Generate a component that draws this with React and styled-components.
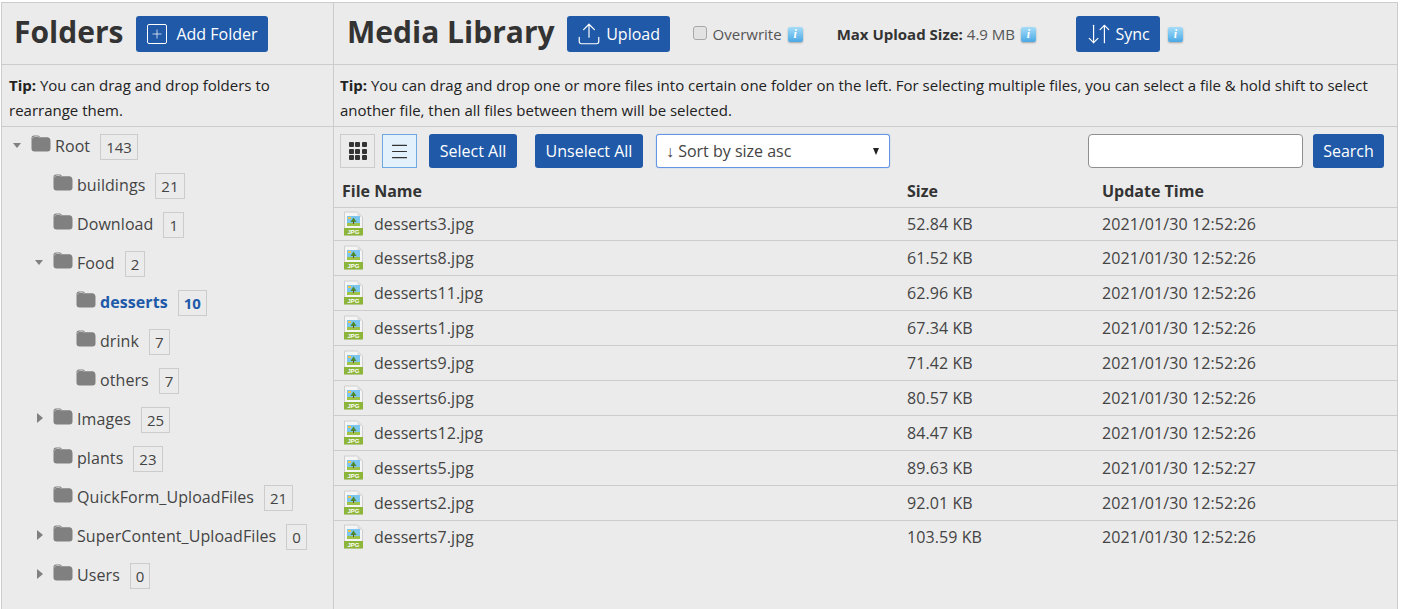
import React from 'react';
import styled, { createGlobalStyle } from 'styled-components';
import { Plus, Upload, ArrowDownUp, Menu } from 'lucide-react';

const GlobalStyle = createGlobalStyle`
  html, body {
    margin: 0;
    padding: 0;
    background: #fff;
    font-family: "Open Sans", "Liberation Sans", sans-serif;
    color: #333;
  }
  * { box-sizing: border-box; }
`;

const Layout = styled.div`
  display: grid;
  grid-template-columns: 332px 1fr;
  width: 1397px;
  height: 607px;
  margin: 2px 0 0 1px;
  background: #ebebeb;
  border: 1px solid #ccc;
  border-bottom: 0;
`;

const Sidebar = styled.aside`
  display: flex;
  flex-direction: column;
  border-right: 1px solid #ccc;
  min-width: 0;
`;

const Main = styled.main`
  display: flex;
  flex-direction: column;
  min-width: 0;
`;

const Header = styled.header`
  display: flex;
  align-items: center;
  height: 62px;
  padding-left: ${p => p.$left}px;
  border-bottom: 1px solid #ccc;
  flex: none;
`;

const Title = styled.h1`
  margin: -3px ${p => p.$gap || 12}px 0 0;
  font-size: 30px;
  font-weight: 700;
  line-height: 40px;
  color: #333;
  white-space: nowrap;
`;

const Button = styled.button`
  display: inline-flex;
  align-items: center;
  justify-content: center;
  gap: ${p => p.$gap || 0}px;
  height: ${p => p.$height || 34}px;
  width: ${p => p.$width}px;
  margin-left: ${p => p.$left || 0}px;
  padding: 0;
  border: 0;
  border-radius: 3px;
  background: #2059a8;
  color: #fff;
  font: 400 16px "Open Sans", sans-serif;
  white-space: nowrap;
  flex: none;
`;

const PlusBox = styled.span`
  display: inline-flex;
  align-items: center;
  justify-content: center;
  width: 20px;
  height: 20px;
  border: 1px solid #fff;
  border-radius: 2px;
`;

const Overwrite = styled.label`
  display: inline-flex;
  align-items: center;
  margin-left: 23px;
  font-size: 15px;
  color: #555;
`;

const Check = styled.span`
  display: inline-block;
  width: 14px;
  height: 14px;
  margin: -1px 6px 0 0;
  border: 1px solid #a8a8a8;
  border-radius: 3px;
  background: #e2e2e2;
`;

const InfoIcon = styled.span`
  display: inline-flex;
  align-items: center;
  justify-content: center;
  width: 15px;
  height: 15px;
  margin-left: ${p => p.$left || 6}px;
  margin-top: 1px;
  border-radius: 2px;
  background: linear-gradient(#a6dcf8 0%, #7cc6f0 45%, #4aa8e4 100%);
  box-shadow: 0 1px 2px rgba(0, 0, 0, 0.3);
  color: #fff;
  font: italic 700 12px "Liberation Serif", serif;
`;

const MaxSize = styled.span`
  display: inline-flex;
  align-items: center;
  margin-left: 34px;
  font-size: 15px;
  color: #555;
  b { font-weight: 700; color: #333; margin-right: 4px; }
`;

const Tip = styled.p`
  height: 62px;
  margin: 0;
  padding: 8px 6px 0 ${p => p.$left}px;
  border-bottom: 1px solid #ccc;
  font-size: 15px;
  line-height: 24.5px;
  color: #222;
  flex: none;
  b { font-weight: 700; }
`;

const Tree = styled.ul`
  list-style: none;
  margin: ${p => (p.$root ? '-1px' : '0')} 0 0;
  padding: 0 0 0 ${p => p.$indent || 0}px;
`;

const Node = styled.div`
  position: relative;
  display: flex;
  align-items: center;
  height: 39px;
  padding-left: 29px;
`;

const Caret = styled.span`
  position: absolute;
  left: ${p => (p.$open ? 10.5 : 13)}px;
  top: ${p => (p.$open ? 16.5 : 14)}px;
  width: 0;
  height: 0;
  border-style: solid;
  border-color: transparent;
  ${p => p.$open
    ? 'border-width: 5px 4.5px 0 4.5px; border-top-color: #808080;'
    : 'border-width: 5px 0 5px 6px; border-left-color: #808080;'}
`;

const FolderSvg = styled.svg`
  width: 20px;
  height: 17px;
  margin: -4px 4px 0 0;
  flex: none;
`;

const Label = styled.span`
  font-size: 16px;
  letter-spacing: 0.08px;
  font-weight: ${p => (p.$active ? 700 : 400)};
  color: ${p => (p.$active ? '#2059a8' : '#444')};
  white-space: nowrap;
`;

const Badge = styled.span`
  display: inline-flex;
  align-items: center;
  justify-content: center;
  height: 26px;
  padding: 1px 5px 0;
  margin: 2px 0 0 10px;
  border: 1px solid #ccc;
  font-size: 15px;
  font-weight: ${p => (p.$active ? 700 : 400)};
  color: ${p => (p.$active ? '#2059a8' : '#444')};
`;

const Toolbar = styled.div`
  display: flex;
  align-items: center;
  height: 48px;
  padding: 0 13px 0 6px;
  flex: none;
`;

const ViewButton = styled.button`
  display: inline-flex;
  align-items: center;
  justify-content: center;
  width: 35px;
  height: 34px;
  margin-right: 7px;
  padding: 0;
  border: 1px solid ${p => (p.$active ? '#6fa8e0' : '#ccc')};
  background: ${p => (p.$active ? '#e3f1fd' : 'transparent')};
  color: #333;
`;

const GridIcon = styled.span`
  display: grid;
  grid-template-columns: repeat(3, 5px);
  gap: 1.5px;
  i {
    height: 5px;
    background: #333;
    border-radius: 1px;
  }
`;

const SortSelect = styled.div`
  display: flex;
  align-items: center;
  justify-content: space-between;
  width: 234px;
  height: 34px;
  margin-left: 13px;
  padding: 0 10px 0 9px;
  border: 1px solid #6596e3;
  border-radius: 3px;
  background: #fff;
  font-size: 16px;
  color: #444;
  box-shadow: 0 0 1px #6596e3;
`;

const SortCaret = styled.span`
  width: 0;
  height: 0;
  border-style: solid;
  border-width: 7px 3.5px 0 3.5px;
  border-color: #222 transparent transparent transparent;
`;

const SearchBox = styled.input`
  width: 215px;
  height: 34px;
  margin-left: auto;
  margin-right: 10px;
  border: 1px solid #8f8f8f;
  border-radius: 4px;
  background: #fff;
`;

const FileTable = styled.table`
  width: 100%;
  border-collapse: collapse;
  table-layout: fixed;
  font-size: 16px;
  letter-spacing: 0.08px;
  color: #444;
`;

const Th = styled.th`
  width: ${p => p.$width}px;
  height: 32px;
  padding: 0 0 0 ${p => p.$pad || 0}px;
  text-align: left;
  font-weight: 700;
  font-size: 16px;
  letter-spacing: 0;
  color: #333;
  border-bottom: 1px solid #ccc;
`;

const Tr = styled.tr`
  height: 35px;
  &:first-child { height: 33px; }
  &:last-child { height: 33px; }
  & + & td { border-top: 1px solid #ccc; }
`;

const Td = styled.td`
  padding: 0;
  white-space: nowrap;
`;

const NameCell = styled.div`
  display: flex;
  align-items: center;
  gap: 10px;
  padding-left: 9px;
`;

const FileSvg = styled.svg`
  width: 21px;
  height: 25px;
  flex: none;
`;

const IconLabel = styled.text`
  font-family: "Liberation Sans", sans-serif;
  font-size: 6px;
  font-weight: 700;
  fill: #fff;
  text-anchor: middle;
`;

const FolderIcon = () => (
  <FolderSvg viewBox="0 0 20 17">
    <path d="M0.5 4V3A2.5 2.5 0 0 1 3 0.5h3.5c1 0 1.5 .5 2 1l.8 .8h7.7A3.5 3.5 0 0 1 19.5 5.8v7.7A3 3 0 0 1 16.5 16.5h-13A3 3 0 0 1 .5 13.5z" fill="#808080" />
    <path d="M1.5 3.5c.5-1.5 1.5-2 2.5-2h3l1.5 1.5" stroke="#bdbdbd" strokeWidth="1" fill="none" />
  </FolderSvg>
);

const JpgIcon = () => (
  <FileSvg viewBox="0 0 21 25">
    <path d="M1.5 1h13l5 5v18h-18z" fill="#f5f5f5" stroke="#cfcfcf" />
    <path d="M14.5 1v5h5z" fill="#dedede" />
    <rect x="4" y="5" width="13" height="10" fill="#7cc5ee" />
    <rect x="4" y="12" width="13" height="3" fill="#9cc24a" />
    <rect x="5" y="6" width="3" height="2" fill="#f5c242" />
    <path d="M10.5 6.5l3 4.5h-6z" fill="#4d8b2a" />
    <rect x="10" y="10.5" width="1" height="2.5" fill="#6b4a22" />
    <rect x="1" y="17" width="19" height="7.5" fill="#8db53a" />
    <IconLabel x="10.5" y="23">JPG</IconLabel>
  </FileSvg>
);

const folders = [
  { name: 'Root', count: 143, open: true, indent: 22, children: [
    { name: 'buildings', count: 21 },
    { name: 'Download', count: 1 },
    { name: 'Food', count: 2, open: true, indent: 23, children: [
      { name: 'desserts', count: 10, active: true },
      { name: 'drink', count: 7 },
      { name: 'others', count: 7 },
    ] },
    { name: 'Images', count: 25, closed: true },
    { name: 'plants', count: 23 },
    { name: 'QuickForm_UploadFiles', count: 21 },
    { name: 'SuperContent_UploadFiles', count: 0, closed: true },
    { name: 'Users', count: 0, closed: true },
  ] },
];

const files = [
  ['desserts3.jpg', '52.84 KB', '2021/01/30 12:52:26'],
  ['desserts8.jpg', '61.52 KB', '2021/01/30 12:52:26'],
  ['desserts11.jpg', '62.96 KB', '2021/01/30 12:52:26'],
  ['desserts1.jpg', '67.34 KB', '2021/01/30 12:52:26'],
  ['desserts9.jpg', '71.42 KB', '2021/01/30 12:52:26'],
  ['desserts6.jpg', '80.57 KB', '2021/01/30 12:52:26'],
  ['desserts12.jpg', '84.47 KB', '2021/01/30 12:52:26'],
  ['desserts5.jpg', '89.63 KB', '2021/01/30 12:52:27'],
  ['desserts2.jpg', '92.01 KB', '2021/01/30 12:52:26'],
  ['desserts7.jpg', '103.59 KB', '2021/01/30 12:52:26'],
];

function FolderTree({ items, indent, root }) {
  return (
    <Tree $indent={indent} $root={root}>
      {items.map(item => (
        <li key={item.name}>
          <Node>
            {item.open && <Caret $open />}
            {item.closed && <Caret />}
            <FolderIcon />
            <Label $active={item.active}>{item.name}</Label>
            <Badge $active={item.active}>{item.count}</Badge>
          </Node>
          {item.children && <FolderTree items={item.children} indent={item.indent} />}
        </li>
      ))}
    </Tree>
  );
}

export default function App() {
  return (
    <>
      <GlobalStyle />
      <Layout>
        <Sidebar>
          <Header $left={12}>
            <Title $gap={13}>Folders</Title>
            <Button $width={132} $height={36} $gap={9}>
              <PlusBox><Plus size={14} strokeWidth={1.25} /></PlusBox>
              Add Folder
            </Button>
          </Header>
          <Tip $left={7}><b>Tip:</b> You can drag and drop folders to rearrange them.</Tip>
          <FolderTree items={folders} root />
        </Sidebar>
        <Main>
          <Header $left={13}>
            <Title>Media Library</Title>
            <Button $width={103} $height={36} $gap={4}>
              <Upload size={26} strokeWidth={1.1} />
              Upload
            </Button>
            <Overwrite><Check />Overwrite<InfoIcon>i</InfoIcon></Overwrite>
            <MaxSize><b>Max Upload Size:</b> 4.9 MB<InfoIcon>i</InfoIcon></MaxSize>
            <Button $width={84} $height={36} $gap={3} $left={40}>
              <ArrowDownUp size={26} strokeWidth={1.1} />
              Sync
            </Button>
            <InfoIcon $left={8}>i</InfoIcon>
          </Header>
          <Tip $left={6}>
            <b>Tip:</b> You can drag and drop one or more files into certain one folder on the left. For selecting multiple files, you can select a file &amp; hold shift to select another file, then all files between them will be selected.
          </Tip>
          <Toolbar>
            <ViewButton><GridIcon>{Array.from({ length: 9 }, (_, i) => <i key={i} />)}</GridIcon></ViewButton>
            <ViewButton $active><Menu size={21} strokeWidth={1.25} /></ViewButton>
            <Button $width={88} $left={5}>Select All</Button>
            <Button $width={108} $left={18}>Unselect All</Button>
            <SortSelect>
              <span>↓ Sort by size asc</span>
              <SortCaret />
            </SortSelect>
            <SearchBox />
            <Button $width={71}>Search</Button>
          </Toolbar>
          <FileTable>
            <thead>
              <tr>
                <Th $width={573} $pad={8}>File Name</Th>
                <Th $width={195}>Size</Th>
                <Th>Update Time</Th>
              </tr>
            </thead>
            <tbody>
              {files.map(([name, size, time]) => (
                <Tr key={name}>
                  <Td><NameCell><JpgIcon />{name}</NameCell></Td>
                  <Td>{size}</Td>
                  <Td>{time}</Td>
                </Tr>
              ))}
            </tbody>
          </FileTable>
        </Main>
      </Layout>
    </>
  );
}
